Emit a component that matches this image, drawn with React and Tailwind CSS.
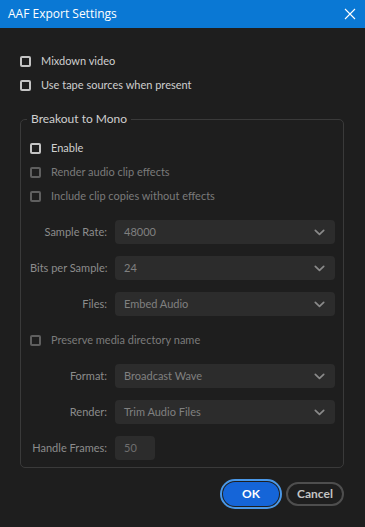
import React from 'react';

// Boîte de dialogue "AAF Export Settings"

const Check = ({ label, dim = false }) => (
  <label className="flex h-[24px] items-center gap-[10px]">
    <span
      className={`h-[11px] w-[11px] rounded-[2px] border-2 ${
        dim ? 'border-[#5f5f5f]' : 'border-[#c4c4c4]'
      }`}
    />
    <span className={dim ? 'text-[#7b7b7b]' : 'text-[#cfcfcf]'}>{label}</span>
  </label>
);

const Chevron = () => (
  <svg width="11" height="7" viewBox="0 0 11 7" fill="none">
    <path d="M1.3 1.4 5.5 5.4l4.2-4" stroke="#8a8a8a" strokeWidth="1.7" strokeLinecap="round" strokeLinejoin="round" />
  </svg>
);

const Field = ({ label, children }) => (
  <div className="flex h-[24px] items-center gap-[8px]">
    <span className="w-[77px] shrink-0 whitespace-nowrap text-right text-[#8c8c8c]">{label}</span>
    {children}
  </div>
);

const Select = ({ value }) => (
  <div className="flex h-[24px] w-[220px] items-center justify-between rounded-[4px] bg-[#2c2c2c] pl-[9px] pr-[10px] text-[#808080]">
    <span>{value}</span>
    <Chevron />
  </div>
);

export default function App() {
  return (
    <div
      className="flex h-[527px] w-[365px] flex-col bg-[#1e1e1e] text-[11px]"
      style={{ fontFamily: 'Lato, "Noto Sans", sans-serif' }}
    >
      {/* Barre de titre */}
      <div
        className="flex h-[28px] shrink-0 items-center justify-between bg-[#0a78d4] pl-[8px] pr-[9px] text-[12px] text-white"
        style={{ fontFamily: '"Open Sans", "Noto Sans", sans-serif' }}
      >
        <span>AAF Export Settings</span>
        <svg width="12" height="12" viewBox="0 0 12 12">
          <path d="M1 1l10 10M11 1 1 11" stroke="white" strokeWidth="1.1" />
        </svg>
      </div>

      {/* Contenu */}
      <div className="flex flex-col px-[20px] pt-[21px]">
        <Check label="Mixdown video" />
        <Check label="Use tape sources when present" />

        <fieldset className="mr-[1px] mt-[13px] rounded-[5px] border border-[#3a3a3a] pb-[7px] pl-[9px] pr-[8px] pt-[8px]">
          <legend className="-ml-[3px] px-[4px] text-[12px] text-[#cfcfcf]">Breakout to Mono</legend>
          <div className="flex flex-col gap-[12px]">
            <div className="flex flex-col">
              <Check label="Enable" />
              <Check label="Render audio clip effects" dim />
              <Check label="Include clip copies without effects" dim />
            </div>
            <Field label="Sample Rate:">
              <Select value="48000" />
            </Field>
            <Field label="Bits per Sample:">
              <Select value="24" />
            </Field>
            <Field label="Files:">
              <Select value="Embed Audio" />
            </Field>
            <Check label="Preserve media directory name" dim />
            <Field label="Format:">
              <Select value="Broadcast Wave" />
            </Field>
            <Field label="Render:">
              <Select value="Trim Audio Files" />
            </Field>
            <Field label="Handle Frames:">
              <div className="flex h-[24px] w-[40px] items-center rounded-[4px] bg-[#2c2c2c] pl-[9px] text-[#6f6f6f]">
                50
              </div>
            </Field>
          </div>
        </fieldset>

        {/* Boutons */}
        <div className="mt-[14px] flex justify-end gap-[7px] pr-[1px] text-[12px] font-bold">
          <button className="h-[24px] w-[56px] rounded-full bg-[#1565d8] text-white outline-2 outline-offset-1 outline-[#4a98e8]">
            OK
          </button>
          <button className="h-[24px] w-[58px] rounded-full border-2 border-[#4e4e4e] text-[#c4c4c4]">
            Cancel
          </button>
        </div>
      </div>
    </div>
  );
}
